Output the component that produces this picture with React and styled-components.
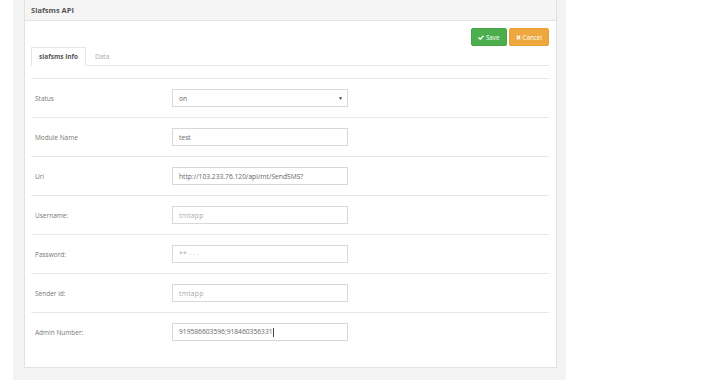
import React from 'react';
import styled, { createGlobalStyle } from 'styled-components';

const GlobalStyle = createGlobalStyle`
  body {
    margin: 0;
    background: #ffffff;
    font-family: 'Open Sans', 'Liberation Sans', sans-serif;
    color: #555;
  }
`

const Page = styled.div`
  width: 710px;
  height: 380px;
  display: flex;
  background: #ffffff;
`

const Wrap = styled.div`
  margin-left: 13px;
  width: 553px;
  height: 380px;
  box-sizing: border-box;
  background: #f3f3f3;
  padding: 0 9px 12px 11px;
`

const Panel = styled.div`
  height: 368px;
  box-sizing: border-box;
  background: #ffffff;
  border: 1px solid #e2e2e2;
  border-top: none;
  display: flex;
  flex-direction: column;
`

const Heading = styled.div`
  height: 21px;
  box-sizing: border-box;
  background: #f5f5f5;
  border-bottom: 1px solid #e4e4e4;
  padding-left: 6px;
  display: flex;
  align-items: center;
  font-size: 7.5px;
  font-weight: 700;
  color: #555;
`

const Body = styled.div`
  padding: 7px 7px 0 6px;
`

const Toolbar = styled.div`
  display: flex;
  justify-content: flex-end;
  gap: 2px;
`

const Button = styled.button`
  height: 18px;
  padding: 0 6px;
  border: 1px solid ${p => p.$border};
  border-radius: 2px;
  background: ${p => p.$bg};
  color: #fff;
  font-family: inherit;
  font-size: 6.3px;
  display: flex;
  align-items: center;
  gap: 2px;
  cursor: pointer;
`

const Tabs = styled.div`
  display: flex;
  margin-top: 1px;
  border-bottom: 1px solid #e6e6e6;
`

const Tab = styled.div`
  height: 19px;
  box-sizing: border-box;
  padding: 0 ${p => (p.$active ? 7 : 8)}px;
  margin-bottom: -1px;
  display: flex;
  align-items: center;
  font-size: 6.5px;
  font-weight: ${p => (p.$active ? 700 : 400)};
  color: ${p => (p.$active ? '#555' : '#aaa')};
  background: ${p => (p.$active ? '#fff' : 'transparent')};
  border: 1px solid ${p => (p.$active ? '#e6e6e6' : 'transparent')};
  border-bottom-color: ${p => (p.$active ? '#fff' : 'transparent')};
`

const Table = styled.div`
  margin-top: 12px;
  display: flex;
  flex-direction: column;
`

const Row = styled.div`
  height: 39px;
  box-sizing: border-box;
  border-top: 1px solid #e8e8e8;
  display: grid;
  grid-template-columns: 141px 176px;
  align-items: center;
`

const Label = styled.div`
  padding-left: 4px;
  font-size: 6.5px;
  color: #777;
`

const Field = styled.div`
  height: 18px;
  box-sizing: border-box;
  border: 1px solid #d8d8d8;
  background: #fff;
  display: flex;
  align-items: center;
  justify-content: space-between;
  padding: 0 4px 0 6px;
  font-size: 6.7px;
  color: ${p => (p.$faint ? '#aaa' : '#666')};
  letter-spacing: ${p => (p.$faint ? '0.3px' : '0')};
`

const Caret = styled.span`
  font-size: 5px;
  color: #444;
`

const Cursor = styled.span`
  display: inline-block;
  width: 1px;
  height: 9px;
  background: #444;
  vertical-align: middle;
`

const CheckIcon = () => (
  <svg width="6" height="5" viewBox="0 0 12 10">
    <path d="M1 5 L4.5 8.5 L11 1.5" stroke="#fff" strokeWidth="2.6" fill="none" />
  </svg>
)

const XIcon = () => (
  <svg width="5" height="5" viewBox="0 0 10 10">
    <path d="M1.5 1.5 L8.5 8.5 M8.5 1.5 L1.5 8.5" stroke="#fff" strokeWidth="2.6" fill="none" />
  </svg>
)

const rows = [
  { label: 'Status', value: 'on', select: true },
  { label: 'Module Name', value: 'test' },
  { label: 'Url', value: 'http://103.233.76.120/api/mt/SendSMS?' },
  { label: 'Username:', value: 'tmtapp', faint: true },
  { label: 'Password:', value: '** · · ·', faint: true },
  { label: 'Sender id:', value: 'tmtapp', faint: true },
  { label: 'Admin Number:', value: '919586603596;918460356331', cursor: true },
]

const App = () => {
  return (
    <Page>
      <GlobalStyle />
      <Wrap>
        <Panel>
          <Heading>Siafsms API</Heading>
          <Body>
            <Toolbar>
              <Button $bg="#4cae4c" $border="#46a246"><CheckIcon />Save</Button>
              <Button $bg="#efa83f" $border="#e89f34"><XIcon />Cancel</Button>
            </Toolbar>
            <Tabs>
              <Tab $active>siafsms info</Tab>
              <Tab>Data</Tab>
            </Tabs>
            <Table>
              {rows.map(r => (
                <Row key={r.label}>
                  <Label>{r.label}</Label>
                  <Field $faint={r.faint}>
                    <span>{r.value}{r.cursor && <Cursor />}</span>
                    {r.select && <Caret>▼</Caret>}
                  </Field>
                </Row>
              ))}
            </Table>
          </Body>
        </Panel>
      </Wrap>
    </Page>
  )
}

export default App;
